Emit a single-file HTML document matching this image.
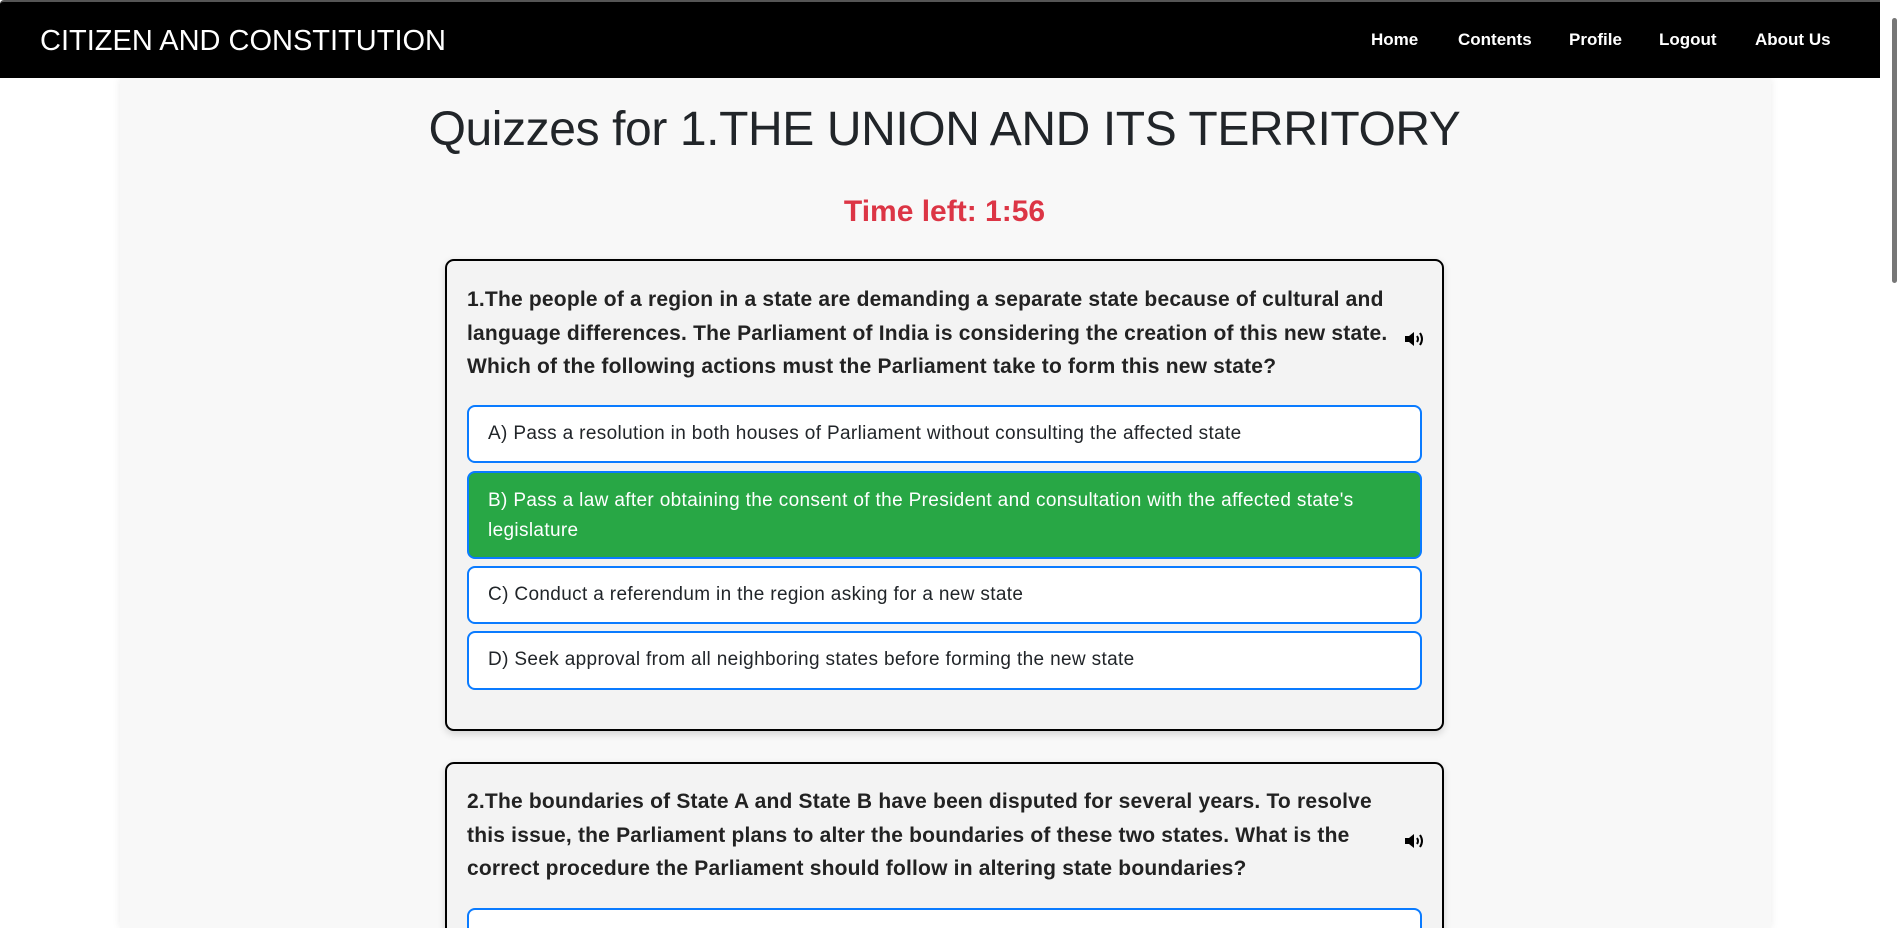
<!DOCTYPE html>
<html><head><meta charset="utf-8"><style>
*{box-sizing:border-box;margin:0;padding:0}
html,body{width:1898px;height:928px;overflow:hidden;background:#fff;font-family:"Liberation Sans",Arial,sans-serif;color:#212529}
#wrap{position:relative;width:1898px;height:928px;overflow:hidden}
.nav{position:absolute;left:0;top:0;width:1880px;height:78px;background:#000;border-top:2px solid #555;border-radius:4px 0 0 0}
.brand{position:absolute;left:40px;top:23px;color:#fff;font-size:29px;letter-spacing:0px;white-space:nowrap}
.nav a{position:absolute;top:28px;color:#fff;font-size:17px;font-weight:bold;text-decoration:none;white-space:nowrap}
.scroll{position:absolute;right:0;top:0;width:18px;height:928px;background:#fff}
.thumb{position:absolute;right:1px;top:18px;width:5px;height:265px;background:#777;border-radius:3px}
.cont{position:absolute;left:120px;top:78px;width:1651px;height:850px;background:#f8f8f8;box-shadow:0 0 8px rgba(0,0,0,.08)}
h1{position:absolute;left:0;width:1889px;top:102px;text-align:center;font-weight:normal;font-size:48px;letter-spacing:-0.4px;color:#212529}
.time{position:absolute;left:0;width:1889px;top:195px;text-align:center;font-weight:bold;font-size:30px;color:#dc3545}
.card{position:absolute;left:445px;width:999px;border:2px solid #000;border-radius:9px;background:#f3f3f3;box-shadow:0 3px 8px rgba(0,0,0,.15)}
.q{position:absolute;left:20px;font-size:21px;font-weight:bold;line-height:33.5px;white-space:nowrap;letter-spacing:0.2px;color:#222}
.spk{position:absolute;width:22px;height:18px}
.opt{position:absolute;left:20px;width:955px;border:2px solid #0a7bff;border-radius:8px;background:#fff;font-size:19px;letter-spacing:0.35px;padding-left:19px;line-height:30px;color:#212529;white-space:nowrap}
.opt.g{background:#28a745;color:#fff}
</style></head><body><div id="wrap">
<div class="cont"></div>
<div class="nav">
<div class="brand">CITIZEN AND CONSTITUTION</div>
<a style="left:1371px">Home</a><a style="left:1458px">Contents</a><a style="left:1569px">Profile</a><a style="left:1659px">Logout</a><a style="left:1755px">About Us</a>
</div>
<div class="scroll"><div class="thumb"></div></div>
<h1>Quizzes for 1.THE UNION AND ITS TERRITORY</h1>
<div class="time">Time left: 1:56</div>

<div class="card" style="top:259px;height:472px">
<div class="q" style="top:22px">1.The people of a region in a state are demanding a separate state because of cultural and<br>language differences. The Parliament of India is considering the creation of this new state.<br>Which of the following actions must the Parliament take to form this new state?</div>
<svg class="spk" style="left:956px;top:69px" viewBox="0 0 22 18"><path d="M2 6h4l5-4v14l-5-4H2z" fill="#000"/><path d="M14 6q2 3 0 6M17 3q4 6 0 12" stroke="#000" stroke-width="2" fill="none"/></svg>
<div class="opt" style="top:144px;height:58px;padding-top:12px">A) Pass a resolution in both houses of Parliament without consulting the affected state</div>
<div class="opt g" style="top:210px;height:88px;padding-top:13px">B) Pass a law after obtaining the consent of the President and consultation with the affected state's<br>legislature</div>
<div class="opt" style="top:305px;height:58px;padding-top:12px">C) Conduct a referendum in the region asking for a new state</div>
<div class="opt" style="top:370px;height:59px;padding-top:12px">D) Seek approval from all neighboring states before forming the new state</div>
</div>

<div class="card" style="top:762px;height:200px">
<div class="q" style="top:21px">2.The boundaries of State A and State B have been disputed for several years. To resolve<br>this issue, the Parliament plans to alter the boundaries of these two states. What is the<br>correct procedure the Parliament should follow in altering state boundaries?</div>
<svg class="spk" style="left:956px;top:68px" viewBox="0 0 22 18"><path d="M2 6h4l5-4v14l-5-4H2z" fill="#000"/><path d="M14 6q2 3 0 6M17 3q4 6 0 12" stroke="#000" stroke-width="2" fill="none"/></svg>
<div class="opt" style="top:144px;height:58px"></div>
</div>
</div></body></html>
